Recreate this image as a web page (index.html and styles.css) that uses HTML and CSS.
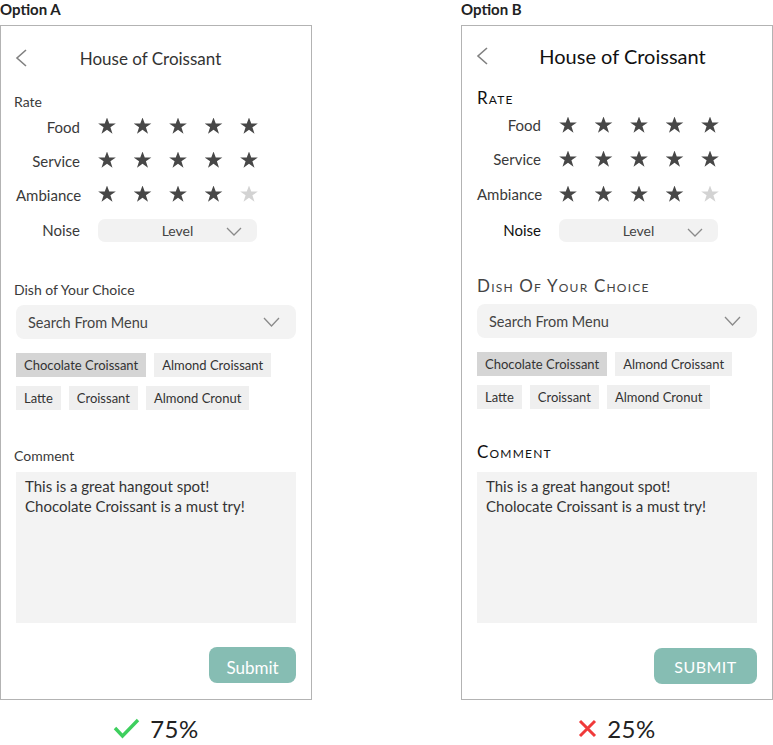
FILE: index.html
```html
<!DOCTYPE html>
<html>
<head>
<meta charset="utf-8">
<link rel="stylesheet" href="styles.css">
</head>
<body>
<div class="board">
  <div class="option">
    <div class="option-label">Option A</div>
    <div class="phone phone-a">
      <div class="header">
        <svg class="back" width="12" height="18" viewBox="0 0 12 18"><polyline points="11,1 2,9 11,17" fill="none" stroke="#808080" stroke-width="1.6"/></svg>
        <div class="title">House of Croissant</div>
      </div>
      <div class="section-label rate-label">Rate</div>
      <div class="rate-grid">
        <div class="rlabel">Food</div>
        <div class="stars"><span class="star on"></span><span class="star on"></span><span class="star on"></span><span class="star on"></span><span class="star on"></span></div>
        <div class="rlabel">Service</div>
        <div class="stars"><span class="star on"></span><span class="star on"></span><span class="star on"></span><span class="star on"></span><span class="star on"></span></div>
        <div class="rlabel">Ambiance</div>
        <div class="stars"><span class="star on"></span><span class="star on"></span><span class="star on"></span><span class="star on"></span><span class="star off"></span></div>
        <div class="rlabel">Noise</div>
        <div class="noise-dd"><span>Level</span><svg class="chev" width="16" height="9" viewBox="0 0 16 9"><polyline points="1,1 8,8 15,1" fill="none" stroke="#8a8a8a" stroke-width="1.3"/></svg></div>
      </div>
      <div class="section-label dish-label">Dish of Your Choice</div>
      <div class="search-dd"><span>Search From Menu</span><svg class="chev" width="17" height="10" viewBox="0 0 17 10"><polyline points="1,1 8.5,9 16,1" fill="none" stroke="#8a8a8a" stroke-width="1.3"/></svg></div>
      <div class="chips">
        <div class="chip-row"><span class="chip sel">Chocolate Croissant</span><span class="chip">Almond Croissant</span></div>
        <div class="chip-row"><span class="chip">Latte</span><span class="chip">Croissant</span><span class="chip">Almond Cronut</span></div>
      </div>
      <div class="section-label comment-label">Comment</div>
      <div class="comment-box">This is a great hangout spot!<br>Chocolate Croissant is a must try!</div>
      <div class="submit-row"><span class="submit">Submit</span></div>
    </div>
    <div class="result">
      <svg width="27" height="22" viewBox="0 0 27 22"><polyline points="2,11 9.5,19 25,3" fill="none" stroke="#3ecf5e" stroke-width="3.4"/></svg>
      <span class="pct">75%</span>
    </div>
  </div>

  <div class="option">
    <div class="option-label">Option B</div>
    <div class="phone phone-b">
      <div class="header">
        <svg class="back" width="12" height="18" viewBox="0 0 12 18"><polyline points="11,1 2,9 11,17" fill="none" stroke="#808080" stroke-width="1.6"/></svg>
        <div class="title">House of Croissant</div>
      </div>
      <div class="section-label rate-label">Rate</div>
      <div class="rate-grid">
        <div class="rlabel">Food</div>
        <div class="stars"><span class="star on"></span><span class="star on"></span><span class="star on"></span><span class="star on"></span><span class="star on"></span></div>
        <div class="rlabel">Service</div>
        <div class="stars"><span class="star on"></span><span class="star on"></span><span class="star on"></span><span class="star on"></span><span class="star on"></span></div>
        <div class="rlabel">Ambiance</div>
        <div class="stars"><span class="star on"></span><span class="star on"></span><span class="star on"></span><span class="star on"></span><span class="star off"></span></div>
        <div class="rlabel dark">Noise</div>
        <div class="noise-dd"><span>Level</span><svg class="chev" width="16" height="9" viewBox="0 0 16 9"><polyline points="1,1 8,8 15,1" fill="none" stroke="#8a8a8a" stroke-width="1.3"/></svg></div>
      </div>
      <div class="section-label dish-label">Dish Of Your Choice</div>
      <div class="search-dd"><span>Search From Menu</span><svg class="chev" width="17" height="10" viewBox="0 0 17 10"><polyline points="1,1 8.5,9 16,1" fill="none" stroke="#8a8a8a" stroke-width="1.3"/></svg></div>
      <div class="chips">
        <div class="chip-row"><span class="chip sel">Chocolate Croissant</span><span class="chip">Almond Croissant</span></div>
        <div class="chip-row"><span class="chip">Latte</span><span class="chip">Croissant</span><span class="chip">Almond Cronut</span></div>
      </div>
      <div class="section-label comment-label">Comment</div>
      <div class="comment-box">This is a great hangout spot!<br>Cholocate Croissant is a must try!</div>
      <div class="submit-row"><span class="submit">Submit</span></div>
    </div>
    <div class="result">
      <svg width="19" height="19" viewBox="0 0 19 19"><path d="M2 2 L17 17 M17 2 L2 17" fill="none" stroke="#f03a3a" stroke-width="3"/></svg>
      <span class="pct">25%</span>
    </div>
  </div>
</div>
</body>
</html>
```
FILE: styles.css
```css
* { box-sizing: border-box; }
html, body { margin: 0; padding: 0; background: #fff; }
body {
  font-family: Lato, "Open Sans", "Liberation Sans", sans-serif;
  color: #333;
}
.board {
  display: flex;
  gap: 149px;
  width: 773px;
}
.option {
  width: 312px;
  display: flex;
  flex-direction: column;
}
.option-label {
  font-weight: bold;
  font-size: 15px;
  line-height: 18px;
  height: 25px;
  color: #222;
}
.phone {
  border: 1px solid #b3b3b3;
  height: 675px;
  padding: 0 15px 0 15px;
  display: flex;
  flex-direction: column;
}
.header {
  display: flex;
  align-items: center;
  height: 24px;
  margin-top: 20px;
}
.back { margin-left: -1px; }
.title {
  flex: 1;
  text-align: center;
  font-size: 17px;
  color: #333;
  padding-right: 22px;
}
.section-label {
  font-size: 14px;
  line-height: 20px;
  color: #3a3a3a;
  margin-left: -2px;
}
.rate-label { margin-top: 22px; }
.rate-grid {
  display: grid;
  grid-template-columns: 64px 160px;
  grid-template-rows: 34px 34px 34px 36px;
  column-gap: 18px;
  align-items: center;
  margin-top: -2px;
}
.rlabel {
  text-align: right;
  font-size: 15px;
  color: #3a3a3a;
}
.stars {
  display: flex;
  justify-content: space-between;
  width: 160px;
  margin-top: -2px;
}
.star {
  width: 18px;
  height: 17px;
  background: #474747;
  clip-path: polygon(50% 0%, 62.5% 36%, 99% 36%, 69% 58%, 80.5% 95%, 50% 72%, 19.5% 95%, 31% 58%, 1% 36%, 37.5% 36%);
}
.star.off { background: #d3d3d3; }
.noise-dd {
  height: 23px;
  width: 159px;
  background: #f2f2f2;
  border-radius: 7px;
  display: flex;
  align-items: center;
  justify-content: center;
  position: relative;
  font-size: 14px;
  color: #444;
  margin-top: 1px;
}
.noise-dd .chev { position: absolute; right: 15px; top: 8px; }
.dish-label { margin-top: 32px; }
.search-dd {
  margin-top: 5px;
  height: 34px;
  background: #f3f3f3;
  border-radius: 8px;
  display: flex;
  align-items: center;
  justify-content: space-between;
  padding: 0 16px 0 12px;
  font-size: 14.5px;
  color: #444;
}
.chips {
  margin-top: 14px;
  display: flex;
  flex-direction: column;
  gap: 9px;
}
.chip-row { display: flex; gap: 8px; }
.chip {
  height: 24px;
  line-height: 24px;
  padding: 0 8px;
  background: #efefef;
  font-size: 13px;
  color: #333;
}
.chip.sel { background: #d5d5d5; }
.comment-label { margin-top: 36px; }
.comment-box {
  margin-top: 6px;
  height: 151px;
  background: #f3f3f3;
  padding: 4px 9px;
  font-size: 15px;
  line-height: 20px;
  color: #333;
}
.submit-row {
  margin-top: 24px;
  display: flex;
  justify-content: flex-end;
}
.submit {
  width: 87px;
  height: 36px;
  border-radius: 8px;
  background: #86bdb3;
  color: #fff;
  font-size: 17px;
  display: flex;
  align-items: center;
  justify-content: center;
  padding-top: 4px;
}
.result {
  display: flex;
  align-items: center;
  justify-content: center;
  gap: 10px;
  height: 56px;
}
.pct {
  font-size: 24px;
  color: #222;
  letter-spacing: 0.5px;
}

/* Option B variant */
.phone-b .header { margin-top: 18px; }
.phone-b .title { font-size: 20px; color: #111; padding-right: 0; }
.phone-b .section-label {
  font-variant: small-caps;
  font-size: 17px;
  letter-spacing: 1.2px;
  color: #333;
  margin-left: 0;
}
.phone-b .rate-label { margin-top: 20px; color: #111; }
.phone-b .rate-grid { grid-template-rows: 34px 34px 36px 36px; margin-top: 0; }
.phone-b .stars { margin-top: 0; }
.phone-b .noise-dd { margin-top: 0; }
.phone-b .rlabel.dark { color: #111; }
.phone-b .noise-dd .chev { top: 9px; }
.phone-b .dish-label { margin-top: 28px; color: #444; }
.phone-b .search-dd { margin-top: 8px; }
.phone-b .comment-label { margin-top: 33px; color: #111; }
.phone-b .comment-box { margin-top: 10px; }
.phone-b .submit-row { margin-top: 25px; }
.phone-b .submit {
  width: 103px;
  text-transform: uppercase;
  font-size: 16px;
  letter-spacing: 0.5px;
  padding-top: 0;
}
```
